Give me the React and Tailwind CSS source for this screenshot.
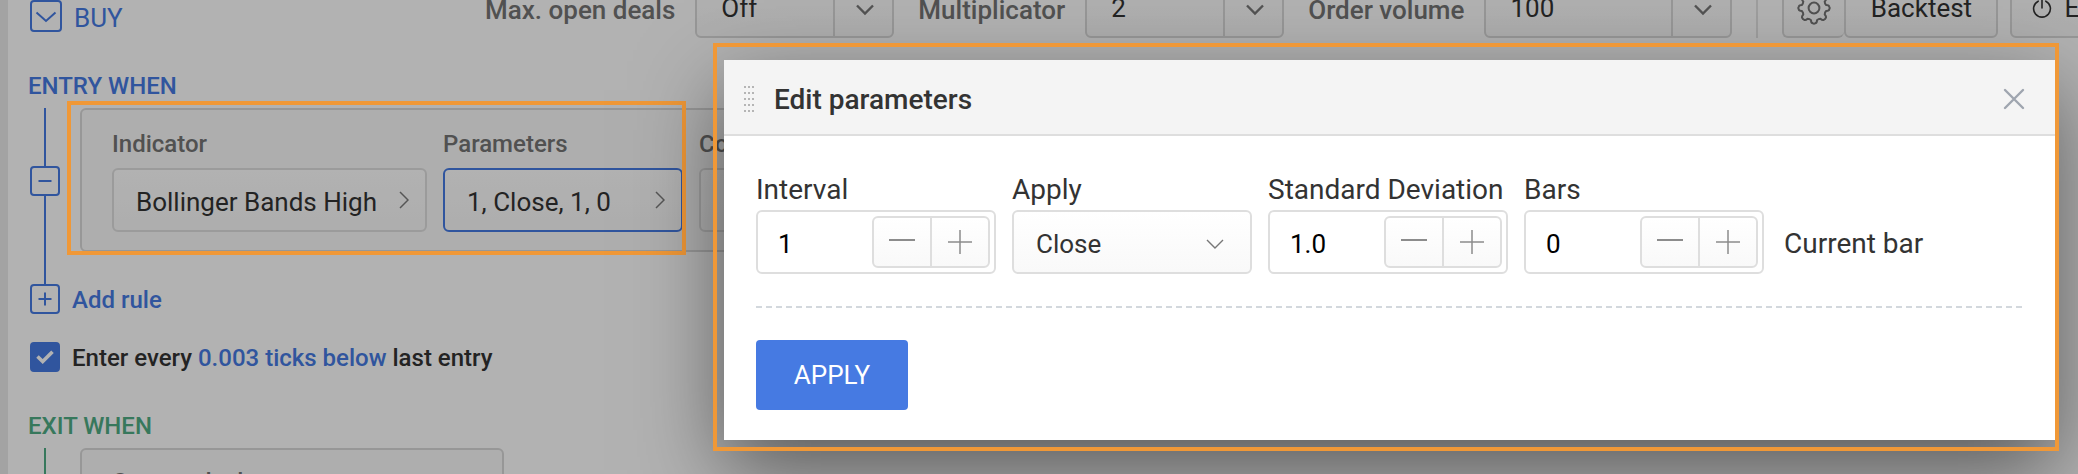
import React, { useState } from 'react';

const GEAR_TEETH = [0, 45, 90, 135, 180, 225, 270, 315];

const polar = (radius, degrees) => {
  const rad = (degrees * Math.PI) / 180;
  return `${(17 + radius * Math.cos(rad)).toFixed(2)} ${(17 + radius * Math.sin(rad)).toFixed(2)}`;
};

// Each tooth is a rounded bump followed by a shallow valley
const gearPath = GEAR_TEETH.map((a, i) => {
  const start = i === 0 ? `M${polar(12.5, a - 14)}` : `L${polar(12.5, a - 14)}`;
  return `${start} Q${polar(15.4, a - 11)} ${polar(15.4, a - 4)} Q${polar(16, a)} ${polar(15.4, a + 4)} Q${polar(15.4, a + 11)} ${polar(12.5, a + 14)} Q${polar(11.6, a + 22)} ${polar(12.5, a + 31)}`;
}).join(' ') + ' Z';

const GearIcon = () => (
  <svg width="34" height="34" viewBox="0 0 34 34" fill="none" stroke="currentColor" strokeWidth="2" strokeLinejoin="round">
    <path d={gearPath} />
    <circle cx="17" cy="17" r="5.4" />
  </svg>
);

const PowerIcon = () => (
  <svg width="20" height="22" viewBox="0 0 20 22" fill="none" stroke="currentColor" strokeWidth="1.6" strokeLinecap="round">
    <path d="M6.2 4.2a8.4 8.4 0 1 0 7.6 0M10 1.5v9.5" />
  </svg>
);

const ChevronRight = () => (
  <svg width="10" height="18" viewBox="0 0 10 18" fill="none" stroke="#7b7b7b" strokeWidth="1.5">
    <path d="M1 1l8 8-8 8" />
  </svg>
);

const TopSelect = ({ id, label, value, width }) => (
  <div className="flex items-center">
    <label htmlFor={id} className="pt-2 pr-5 text-[26px] font-medium text-[#747474] whitespace-nowrap">{label}</label>
    <div className={`relative h-16 ${width}`}>
      <select
        id={id}
        className="appearance-none w-full h-full pl-6 pt-1 text-[26px] text-[#333] bg-linear-to-b from-white to-[#f9f9f9] border-2 border-[#d8d8d8] rounded-md"
      >
        <option>{value}</option>
      </select>
      <span className="absolute inset-y-0 right-0 w-[61px] flex items-center justify-center border-l-2 border-[#d8d8d8] pointer-events-none">
        <svg width="18" height="12" viewBox="0 0 18 12" className="mt-2" fill="none" stroke="#777" strokeWidth="2.4">
          <path d="M1 1.5l8 8 8-8" />
        </svg>
      </span>
    </div>
  </div>
);

const PickerButton = ({ label, value, width, active }) => (
  <div className={`shrink-0 ${width}`}>
    <div className="mb-[10px] text-2xl leading-7 font-medium text-[#747474]">{label}</div>
    <button
      type="button"
      aria-label={label}
      className={`flex items-center justify-between w-full h-16 pl-[22px] pr-4 border-2 rounded-md bg-linear-to-b from-white to-[#f9f9f9] text-[26px] text-[#333] whitespace-nowrap ${active ? 'border-[#467ae2]' : 'border-[#dedede]'}`}
    >
      <span className="pt-1">{value}</span>
      <ChevronRight />
    </button>
  </div>
);

const SquareIcon = ({ plus }) => (
  <svg width="30" height="30" viewBox="0 0 30 30" fill="none" stroke="#467ae2" strokeWidth="2" className="shrink-0">
    <rect x="1" y="1" width="28" height="28" rx="3" />
    <path d={plus ? 'M8.5 15h13M15 8.5v13' : 'M8.5 15h13'} />
  </svg>
);

const StepperField = ({ id, label, initial, step, digits }) => {
  const [value, setValue] = useState(initial);
  const change = (amount) => setValue((Number(value) + amount).toFixed(digits));

  return (
    <div className="w-60">
      <label htmlFor={id} className="block h-10 text-[28px] leading-10 text-[#333] whitespace-nowrap">{label}</label>
      <div className="flex h-16 p-1 border-2 border-[#dedede] rounded-md bg-white">
        <input
          id={id}
          type="text"
          value={value}
          onChange={(e) => setValue(e.target.value)}
          className="flex-1 min-w-0 pl-4 pt-1 text-[26px] text-black outline-none"
        />
        <div className="flex w-[118px] border-2 border-[#dedede] rounded-md bg-linear-to-b from-white to-[#f9f9f9] text-[#8c8c8c]">
          <button type="button" aria-label={`Decrease ${label}`} onClick={() => change(-step)} className="flex-1 flex items-center justify-center">
            <svg width="26" height="26" viewBox="0 0 26 26" stroke="currentColor" strokeWidth="2">
              <path d="M0 11h26" />
            </svg>
          </button>
          <button type="button" aria-label={`Increase ${label}`} onClick={() => change(step)} className="flex-1 flex items-center justify-center border-l-2 border-[#dedede]">
            <svg width="24" height="24" viewBox="0 0 24 24" stroke="currentColor" strokeWidth="1.5">
              <path d="M0 12h24M12 0v24" />
            </svg>
          </button>
        </div>
      </div>
    </div>
  );
};

const EditParametersDialog = () => (
  <div role="dialog" aria-label="Edit parameters" className="absolute z-30 left-[724px] right-[23px] top-[60px] bg-white shadow-[0_30px_80px_rgba(0,0,0,0.5)]">
    {/* Header */}
    <div className="flex items-center h-[76px] pt-[3px] pl-5 pr-[30px] bg-[#f4f4f4] border-b-2 border-[#dedede]">
      <svg width="10" height="26" viewBox="0 0 10 26" fill="#b5b5b5">
        {[0, 6, 12, 18, 24].map((y) => [0, 4, 8].map((x) => <rect key={`${x}-${y}`} x={x} y={y} width="2" height="2" />))}
      </svg>
      <h2 className="ml-5 pt-[3px] text-[28px] font-medium text-[#333]">Edit parameters</h2>
      <button type="button" aria-label="Close" className="ml-auto">
        <svg width="22" height="22" viewBox="0 0 22 22" fill="none" stroke="#9fa5af" strokeWidth="2.4" strokeLinecap="round">
          <path d="M2 2l18 18M20 2L2 20" />
        </svg>
      </button>
    </div>

    {/* Fields */}
    <div className="px-8 pt-[34px] pb-[30px]">
      <div className="flex items-end gap-4">
        <StepperField id="interval" label="Interval" initial="1" step={1} digits={0} />
        <div className="w-60">
          <label htmlFor="apply" className="block h-10 text-[28px] leading-10 text-[#333]">Apply</label>
          <div className="relative h-16">
            <select id="apply" className="appearance-none w-full h-full pl-[22px] pt-1 text-[26px] text-[#333] bg-linear-to-b from-white to-[#f9f9f9] border-2 border-[#dedede] rounded-md">
              <option>Close</option>
            </select>
            <svg width="18" height="12" viewBox="0 0 18 12" className="absolute right-7 top-7 pointer-events-none" fill="none" stroke="#777" strokeWidth="1.4">
              <path d="M1 2l8 8 8-8" />
            </svg>
          </div>
        </div>
        <StepperField id="deviation" label="Standard Deviation" initial="1.0" step={0.1} digits={1} />
        <StepperField id="bars" label="Bars" initial="0" step={1} digits={0} />
        <div className="flex items-center h-16 pl-1 pt-1 text-[28px] text-[#333] whitespace-nowrap">Current bar</div>
      </div>

      <div className="h-[2px] my-8 bg-[repeating-linear-gradient(90deg,#d3d8dd_0,#d3d8dd_6px,transparent_6px,transparent_10px)]"></div>

      <button type="button" className="block w-[152px] h-[70px] rounded-sm bg-[#467ae2] text-[26px] text-white">APPLY</button>
    </div>

    <div className="absolute -top-[17px] -bottom-[11px] -left-[11px] -right-1 border-4 border-[#f09837] pointer-events-none"></div>
  </div>
);

const App = () => {
  const [checked, setChecked] = useState(true);

  return (
    <div className="relative h-screen overflow-hidden bg-white font-[Roboto,sans-serif] text-[#333]">
      <div className="flow-root min-h-screen pl-[22px] border-l-8 border-[#eaeaea]">
        {/* Toolbar */}
        <div className="flex items-end -mt-[26px] h-16">
          <div className="flex items-center w-[455px] h-8 mb-[6px] gap-3 shrink-0">
            <button type="button" aria-label="Collapse" className="text-[#467ae2]">
              <svg width="32" height="32" viewBox="0 0 32 32" fill="none" stroke="currentColor" strokeWidth="2">
                <rect x="1" y="1" width="30" height="30" rx="3" />
                <path d="M6.500 12.500l9.500 8.500 9.500-8.500" />
              </svg>
            </button>
            <span className="pt-1 text-[26px] text-[#467ae2]">BUY</span>
          </div>
          <div className="flex shrink-0 gap-6">
            <TopSelect id="max-deals" label="Max. open deals" value="Off" width="w-[199px]" />
            <TopSelect id="multiplicator" label="Multiplicator" value="2" width="w-[199px]" />
            <TopSelect id="volume" label="Order volume" value="100" width="w-[248px]" />
            <div className="w-[2px] h-16 bg-[#e2e2e2]"></div>
            <div className="flex">
              <button type="button" aria-label="Settings" className="flex items-center justify-center w-[62px] h-16 pt-1 text-[#747474] bg-linear-to-b from-white to-[#f9f9f9] border-2 border-r-0 border-[#d8d8d8] rounded-md">
                <GearIcon />
              </button>
              <button type="button" className="w-[154px] h-16 pt-1 text-[26px] bg-linear-to-b from-white to-[#f9f9f9] border-2 border-[#d8d8d8] rounded-md">Backtest</button>
              <button type="button" className="flex items-center gap-3 h-16 ml-3 px-5 pt-1 text-[26px] bg-linear-to-b from-white to-[#f9f9f9] border-2 border-[#d8d8d8] rounded-md">
                <PowerIcon />
                Enable
              </button>
            </div>
          </div>
        </div>

        {/* Entry rules */}
        <h3 className="-ml-0.5 mt-[34px] mb-2 text-2xl leading-7 font-medium text-[#467ae2]">ENTRY WHEN</h3>
        <div className="flex gap-5">
          <div className="flex flex-col items-center w-[30px]">
            <span className="w-[2px] h-[58px] bg-[#467ae2]"></span>
            <button type="button" aria-label="Remove rule"><SquareIcon /></button>
            <span className="w-[2px] flex-1 bg-[#467ae2]"></span>
          </div>
          <div className="relative flex flex-1 gap-4 mb-8 mr-6 px-[30px] pt-5 pb-[18px] bg-[#fafafa] border-2 border-[#d8d8d8] rounded-md">
            <PickerButton label="Indicator" value="Bollinger Bands High" width="w-[315px]" />
            <PickerButton label="Parameters" value="1, Close, 1, 0" width="w-60" active />
            <PickerButton label="Condition" value="" width="w-60" />
            <div className="absolute z-20 -top-[9px] -left-[15px] -bottom-[5px] w-[619px] border-4 border-[#f09837] pointer-events-none"></div>
          </div>
        </div>
        <button type="button" className="flex items-center h-[30px] gap-3 text-2xl font-medium text-[#467ae2]">
          <SquareIcon plus />
          <span className="pt-[2px]">Add rule</span>
        </button>

        <label className="relative flex items-center h-[30px] mt-7 gap-3 text-2xl font-medium">
          <input
            type="checkbox"
            checked={checked}
            onChange={(e) => setChecked(e.target.checked)}
            className="appearance-none w-[30px] h-[30px] rounded-sm border-2 border-[#467ae2] checked:bg-[#467ae2]"
          />
          {checked && (
            <svg width="18" height="14" viewBox="0 0 18 14" className="absolute left-[6px] top-2 pointer-events-none" fill="none" stroke="#fff" strokeWidth="3.6">
              <path d="M1.500 6.500l5.200 5L16.500 1.800" />
            </svg>
          )}
          <span className="pt-[2px]">Enter every <span className="text-[#467ae2]">0.003 ticks below</span> last entry</span>
        </label>

        {/* Exit rules */}
        <h3 className="-ml-0.5 mt-10 mb-2 text-2xl leading-7 font-medium text-[#4fad85]">EXIT WHEN</h3>
        <div className="flex gap-5">
          <div className="flex justify-center w-[30px]">
            <span className="w-[2px] bg-[#4fad85]"></span>
          </div>
          <div className="w-[424px] px-[30px] py-[18px] bg-[#fafafa] border-2 border-[#d8d8d8] rounded-md">
            <PickerButton label="Current deal" value="Take profit" width="w-60" />
          </div>
        </div>
      </div>

      {/* Backdrop */}
      <div className="absolute z-10 inset-0 bg-black/30"></div>

      <EditParametersDialog />
    </div>
  );
};

export default App;
